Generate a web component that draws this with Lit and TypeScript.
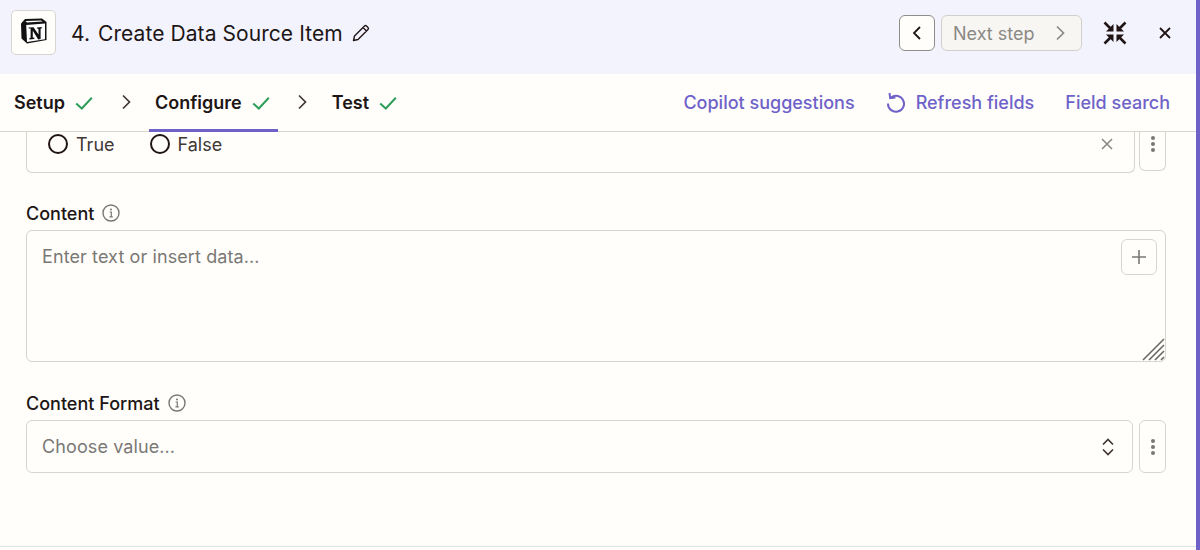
import { LitElement, html, css } from "lit";
import { customElement } from "lit/decorators.js";

const check = html`<svg class="check" width="18" height="18" viewBox="0 0 18 18" fill="none"><path d="M1.2 9.5 L6.8 14.5 L16.8 3.8" stroke="#2f9e5a" stroke-width="2"/></svg>`;
const chevR = html`<svg width="10" height="16" viewBox="0 0 10 16" fill="none"><path d="M2 1.5 L8.5 8 L2 14.5" stroke="currentColor" stroke-width="1.7"/></svg>`;
const info = html`<svg width="18" height="18" viewBox="0 0 18 18" fill="none"><circle cx="9" cy="9" r="8" stroke="#7a7874" stroke-width="1.4"/><circle cx="9" cy="5.4" r="1" fill="#7a7874"/><path d="M7.6 8h1.7v4.6M7.4 12.8h3.4" stroke="#7a7874" stroke-width="1.2"/></svg>`;
const dots = html`<svg width="4" height="16" viewBox="0 0 4 16"><circle cx="2" cy="2" r="2" fill="#7a7874"/><circle cx="2" cy="8" r="2" fill="#7a7874"/><circle cx="2" cy="14" r="2" fill="#7a7874"/></svg>`;

@customElement("app-root")
export class AppRoot extends LitElement {
  static styles = css`
    :host { display: block; width: 1200px; height: 550px; font-family: Inter, "Liberation Sans", sans-serif; color: #201515; background: #fffefb; overflow: hidden; }
    .frame { display: flex; height: 550px; }
    .main { flex: 1; min-width: 0; display: flex; flex-direction: column; }
    .accent { width: 4px; background: #6e62c9; }
    .head { height: 74px; flex: none; background: #f3f3fe; display: flex; align-items: center; padding: 0 25px 9px 11px; box-sizing: border-box; }
    .logo { width: 45px; height: 45px; box-sizing: border-box; border: 1px solid #d7d5d0; border-radius: 5px; background: #fffefb; display: flex; align-items: center; justify-content: center; padding-bottom: 3px; }
    .title { font-size: 21px; margin-left: 15px; padding-top: 2px; letter-spacing: 0.07px; white-space: nowrap; }
    .num { margin-right: 8px; }
    .pencil { margin-left: 9px; display: block; }
    .spacer { flex: 1; }
    .back { width: 36px; height: 36px; box-sizing: border-box; border: 1px solid #8f8d88; border-radius: 6px; background: #fffefb; display: flex; align-items: center; justify-content: center; color: #201515; }
    .next { width: 141px; height: 36px; box-sizing: border-box; margin-left: 6px; border: 1px solid #d2d0ca; border-radius: 6px; background: #f7f6f2; color: #8b8984; font-size: 18px; display: flex; align-items: center; justify-content: space-between; padding: 1px 16px 0 11px; }
    .shrink { margin-left: 21px; display: block; }
    .close { margin-left: 32px; display: block; }
    .tabs { height: 58px; flex: none; box-sizing: border-box; border-bottom: 1px solid #d7d5d0; display: flex; align-items: stretch; padding: 0 26px 0 0; }
    .tab { display: flex; align-items: center; gap: 10px; font-weight: 600; font-size: 18px; padding: 0 6px; position: relative; }
    .tab.first { padding-left: 14px; }
    .tab.active { padding-right: 8px; }
    .tab.active::after { content: ""; position: absolute; left: 0; right: 0; bottom: -1px; height: 3px; background: #6e62c9; }
    .sep { display: flex; align-items: center; color: #413735; width: 10px; margin: 0 18px 2px 22px; }
    .sep.two { margin: 0 19px 2px 19px; }
    .links { margin-left: auto; display: flex; align-items: center; gap: 31px; color: #6e62c9; font-size: 18px; font-weight: 500; }
    .refresh { display: flex; align-items: center; gap: 10px; }
    .body { flex: 1; min-height: 0; overflow: hidden; padding: 0 30px 0 26px; }
    .row { display: flex; gap: 6px; align-items: flex-start; }
    .row.tight { gap: 4px; }
    .box { flex: 1; box-sizing: border-box; border: 1px solid #d7d5d0; background: #fffefb; }
    .bool { height: 41px; border-top: 0; border-radius: 0 0 6px 6px; display: flex; align-items: flex-start; padding: 0 21px 0 21px; font-size: 18px; color: #413735; }
    .radio { display: flex; align-items: center; gap: 8px; height: 24px; margin-right: 35px; }
    .circle { width: 20px; height: 20px; box-sizing: border-box; border: 2px solid #201515; border-radius: 50%; }
    .clear { margin-left: auto; margin-top: 6px; display: block; }
    .kebab { width: 27px; box-sizing: border-box; border: 1px solid #d7d5d0; border-radius: 6px; display: flex; align-items: center; justify-content: center; }
    .kebab.top { height: 39px; border-top: 0; border-radius: 0 0 6px 6px; flex: none; align-items: flex-start; padding-top: 4px; }
    .kebab.full { height: 53px; flex: none; }
    .label { display: flex; align-items: center; gap: 8px; font-size: 18px; font-weight: 500; height: 24px; }
    .label.c { margin-top: 28px; margin-bottom: 5px; }
    .label.f { margin-top: 29px; margin-bottom: 5px; }
    .area { position: relative; height: 132px; border-radius: 6px; padding: 14px 15px; font-size: 18px; letter-spacing: 0.1px; color: #7a7874; line-height: 24px; }
    .plus { position: absolute; top: 8px; right: 8px; width: 36px; height: 36px; box-sizing: border-box; border: 1px solid #d7d5d0; border-radius: 6px; display: flex; align-items: center; justify-content: center; }
    .grip { position: absolute; right: 0; bottom: 0; display: block; }
    .select { height: 53px; border-radius: 6px; display: flex; align-items: center; justify-content: space-between; padding: 0 18px 0 15px; font-size: 18px; letter-spacing: 0.1px; color: #7a7874; }
    .foot { height: 4px; flex: none; border-top: 1px solid #e6e4df; box-sizing: border-box; }
  `;

  render() {
    return html`<div class="frame">
      <div class="main">
        <div class="head">
          <div class="logo">
            <svg width="27" height="26" viewBox="0 0 27 26">
              <path d="M1 5.5 L5 1 L22 0.5 L26.5 4 V22 L7 25.5 L1.5 20.5 Z" fill="#111"/>
              <path d="M6.2 7 L25 5.5 V21.3 L7 24 Z" fill="#fff"/>
              <path d="M5.5 3 L21 2.4 L22.6 3.6 L7 4.6 Z" fill="#fff"/>
              <path d="M8.5 9.5 l5-.3 l5 7.4 v-5.6 l-1.4-.4 v-1.2 l4.6-.3 v1.2 l-1.1.4 v10.4 l-2.4.3 l-5.4-8.6 v6.6 l1.6.4 v1.2 l-5 .4 v-1.2 l1.2-.4 v-9.2 l-1.7-.2 z" fill="#111"/>
            </svg>
          </div>
          <div class="title"><span class="num">4.</span>Create Data Source Item</div>
          <svg class="pencil" width="18" height="18" viewBox="0 0 18 18" fill="none"><path d="M1.5 16.5 L2.5 12 L12.5 2 Q13.5 1 14.5 2 L16 3.5 Q17 4.5 16 5.5 L6 15.5 Z M11 3.5 L14.5 7" stroke="#201515" stroke-width="1.4" stroke-linejoin="round"/></svg>
          <div class="spacer"></div>
          <div class="back"><svg width="10" height="16" viewBox="0 0 10 16" fill="none"><path d="M8 2 L2 8 L8 14" stroke="currentColor" stroke-width="1.8"/></svg></div>
          <div class="next"><span>Next step</span>${chevR}</div>
          <svg class="shrink" width="24" height="24" viewBox="0 0 24 24" fill="#201515" stroke="#201515" stroke-width="2.6"><path fill="none" d="M1.5 1.5 L8 8 M22.5 1.5 L16 8 M1.5 22.5 L8 16 M22.5 22.5 L16 16"/><path stroke="none" d="M10.5 10.5 V3 L3 10.5 Z M13.5 10.5 V3 L21 10.5 Z M10.5 13.5 V21 L3 13.5 Z M13.5 13.5 V21 L21 13.5 Z"/></svg>
          <svg class="close" width="12" height="12" viewBox="0 0 12 12" fill="none"><path d="M1 1 L11 11 M11 1 L1 11" stroke="#201515" stroke-width="1.8"/></svg>
        </div>
        <div class="tabs">
          <div class="tab first"><span>Setup</span>${check}</div>
          <div class="sep">${chevR}</div>
          <div class="tab active"><span>Configure</span>${check}</div>
          <div class="sep two">${chevR}</div>
          <div class="tab"><span>Test</span>${check}</div>
          <div class="links">
            <span>Copilot suggestions</span>
            <span class="refresh"><svg width="20" height="22" viewBox="0 0 20 22" fill="none" stroke="#6e62c9" stroke-width="2"><path d="M5 5.5 A8 8 0 1 1 2 11.5"/><path d="M3.5 1 L4.2 6.2 L9.4 5.6"/></svg>Refresh fields</span>
            <span>Field search</span>
          </div>
        </div>
        <div class="body">
          <div class="row tight">
            <div class="box bool">
              <div class="radio"><div class="circle"></div>True</div>
              <div class="radio"><div class="circle"></div>False</div>
              <svg class="clear" width="12" height="12" viewBox="0 0 12 12" fill="none"><path d="M1 1 L11 11 M11 1 L1 11" stroke="#8b8984" stroke-width="1.6"/></svg>
            </div>
            <div class="kebab top">${dots}</div>
          </div>
          <div class="label c">Content ${info}</div>
          <div class="box area">Enter text or insert data...
            <div class="plus"><svg width="16" height="16" viewBox="0 0 16 16" fill="none"><path d="M8 1 V15 M1 8 H15" stroke="#7a7874" stroke-width="1.6"/></svg></div>
            <svg class="grip" width="23" height="23" viewBox="0 0 23 23" fill="none" stroke="#6b6965" stroke-width="1.6"><path d="M1 22 L22 1 M7 22 L22 7 M13 22 L22 13 M19 22 L22 19"/></svg>
          </div>
          <div class="label f">Content Format ${info}</div>
          <div class="row">
            <div class="box select"><span>Choose value...</span>
              <svg width="12" height="18" viewBox="0 0 12 18" fill="none" stroke="#413735" stroke-width="1.7"><path d="M1 6.5 L6 1.5 L11 6.5 M1 11.5 L6 16.5 L11 11.5"/></svg>
            </div>
            <div class="kebab full">${dots}</div>
          </div>
        </div>
        <div class="foot"></div>
      </div>
      <div class="accent"></div>
    </div>`;
  }
}
